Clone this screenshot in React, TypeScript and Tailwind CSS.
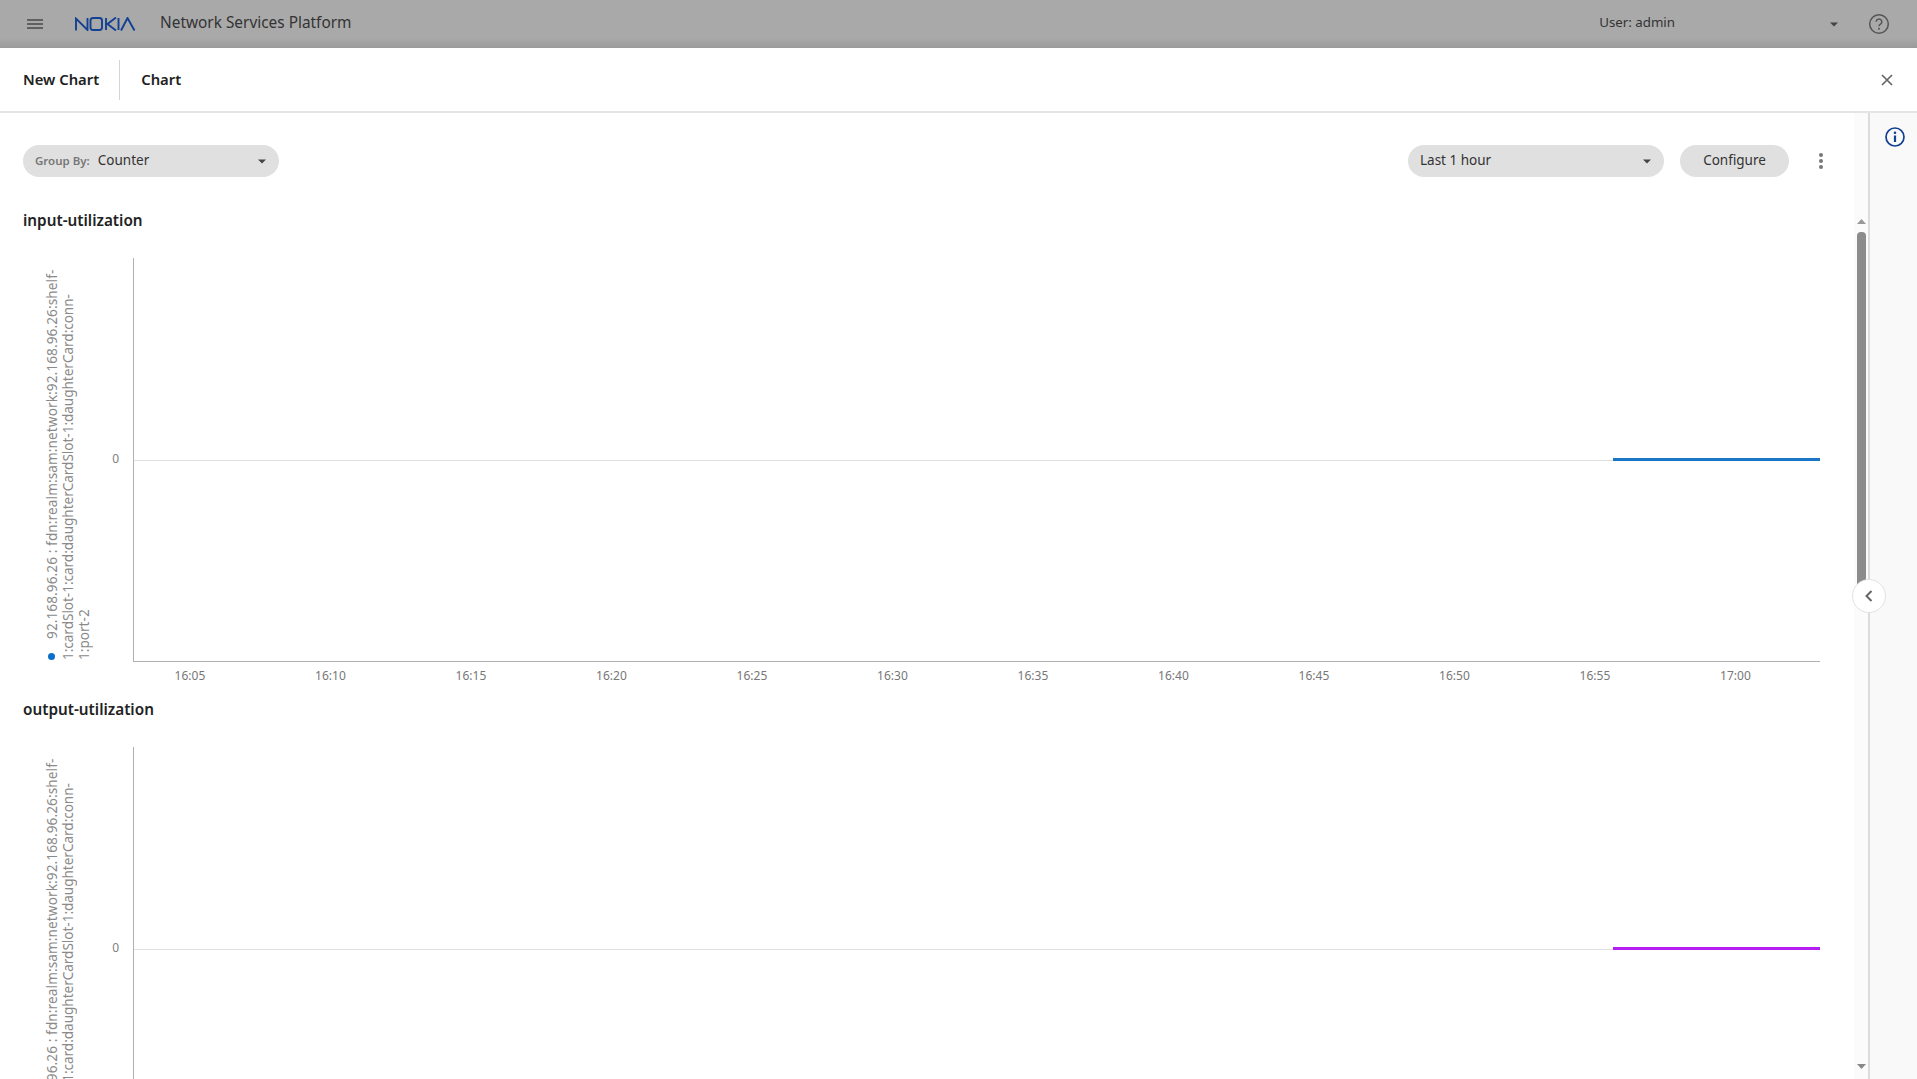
import React from "react";

const font = { fontFamily: '"Noto Sans", "Open Sans", sans-serif' };
const ticks = ["16:05","16:10","16:15","16:20","16:25","16:30","16:35","16:40","16:45","16:50","16:55","17:00"];

function Caret({ className = "" }: { className?: string }) {
  return (
    <svg width="8" height="5" viewBox="0 0 8 5" className={className}>
      <path d="M0 0.5h8L4 4.5z" fill="#444" />
    </svg>
  );
}

function Chart({ title, color, dot }: { title: string; color: string; dot: string }) {
  return (
    <section>
      <h2 className="h-5 text-[15.3px] leading-[18px] font-semibold text-[#222]">{title}</h2>
      <div className="mt-[27px] flex">
        <div className="ml-[21px] h-[404px] w-[89px] shrink-0">
          <div className="h-full w-12 rotate-180 text-[13.6px] leading-4 text-[#8a8a8a] [writing-mode:vertical-rl] whitespace-nowrap">
            <div className="flex items-center pt-[2px] tracking-[0.1px]">
              <span className={`mb-[14px] h-[7px] w-[7px] shrink-0 rounded-full ${dot}`} />
              92.168.96.26 : fdn:realm:sam:network:92.168.96.26:shelf-
            </div>
            <div className="pt-[2px] tracking-[-0.05px]">1:cardSlot-1:card:daughterCardSlot-1:daughterCard:conn-</div>
            <div className="pt-[2px]">1:port-2</div>
          </div>
        </div>
        <div className="w-[1687px] shrink-0">
          <div className="relative h-[404px] border-b border-l border-[#b0b0b0]">
            <span className="absolute right-full top-[193px] mr-[15px] text-xs leading-4 text-[#808080]">0</span>
            <div className="absolute left-0 right-0 top-[202px] h-px bg-[#e0e0e0]" />
            <div className={`absolute right-0 top-[200px] h-[3px] w-[207px] ${color}`} />
          </div>
          <div className="-ml-[13.3px] flex h-[38px] pt-[6px]">
            {ticks.map((t) => (
              <span key={t} className="w-[140.5px] shrink-0 text-center text-xs leading-4 text-[#777]">{t}</span>
            ))}
          </div>
        </div>
      </div>
    </section>
  );
}

export default function App() {
  return (
    <div style={font} className="flex h-screen w-full flex-col overflow-hidden bg-white">
      <header className="flex h-12 shrink-0 items-center bg-gradient-to-b from-[#a9a9a9] from-80% to-[#9a9a9a] text-[#333]">
        <svg width="16" height="10" viewBox="0 0 16 10" className="ml-[27px]">
          <path d="M0 1h16M0 5h16M0 9h16" stroke="#4a4a4a" strokeWidth="1.4" />
        </svg>
        <svg width="61" height="14" viewBox="0 0 61 14" className="ml-[32px]" fill="none" stroke="#124191" strokeWidth="1.9">
          <path d="M1 13.5V1.6L12.5 13V1" />
          <path d="M18 1h6.5q2.5 0 2.5 2.5v7q0 2.5-2.5 2.5H18q-2.5 0-2.5-2.5v-7Q15.500 1 18 1z" />
          <path d="M31 1v12" />
          <path d="M41 0.500L32.500 7l8.500 6.500" />
          <path d="M43.500 1v12" />
          <path d="M46 13.500L52.500 1l7 12.500" />
        </svg>
        <span className="ml-[24px] pb-[2px] text-[15.4px] leading-5">Network Services Platform</span>
        <span className="ml-auto pb-[4px] text-[13.3px] leading-5">User: admin</span>
        <Caret className="ml-[155px]" />
        <svg width="22" height="22" viewBox="0 0 22 22" className="ml-[30px] mr-[27px]" fill="none">
          <circle cx="11" cy="11" r="9.300" stroke="#555" strokeWidth="1.500" />
          <path d="M8.200 8.700a2.800 2.800 0 1 1 4.300 2.400c-.9.600-1.500 1-1.500 2.200" stroke="#555" strokeWidth="1.500" />
          <circle cx="11" cy="15.800" r="1" fill="#555" />
        </svg>
      </header>

      <div className="flex h-[65px] shrink-0 items-center border-b-2 border-[#e4e4e4]">
        <span className="ml-[23px] text-[14.8px] font-semibold text-[#222]">New Chart</span>
        <span className="ml-[20px] h-10 w-px bg-[#d4d4d4]" />
        <span className="ml-[21px] text-[14.8px] font-semibold text-[#222]">Chart</span>
        <svg width="12" height="12" viewBox="0 0 12 12" className="ml-auto mr-[24px]">
          <path d="M1 1l10 10M11 1L1 11" stroke="#666" strokeWidth="1.700" />
        </svg>
      </div>

      <div className="relative flex min-h-0 flex-1">
        <main className="min-w-0 flex-1 overflow-hidden pl-[23px] pt-[32px]">
          <div className="flex h-8 items-center">
            <div className="flex h-8 w-[256px] items-center rounded-full bg-[#e0e0e0] pl-3 pr-3">
              <span className="pb-px text-[11.500px] font-semibold text-[#777]">Group By:</span>
              <span className="ml-2 pb-px text-[13.500px] text-[#333]">Counter</span>
              <Caret className="ml-auto mr-px" />
            </div>
            <div className="ml-auto flex h-8 w-[256px] items-center rounded-full bg-[#e0e0e0] pl-3 pr-3">
              <span className="pb-px text-[13.500px] text-[#333]">Last 1 hour</span>
              <Caret className="ml-auto mr-px" />
            </div>
            <div className="ml-4 flex h-8 w-[109px] items-center justify-center rounded-full bg-[#e0e0e0] pb-px text-[13.500px] text-[#333]">Configure</div>
            <svg width="6" height="18" viewBox="0 0 6 18" className="ml-[29px] mr-[30px]">
              <circle cx="3" cy="3" r="2" fill="#777" /><circle cx="3" cy="9" r="2" fill="#777" /><circle cx="3" cy="15" r="2" fill="#777" />
            </svg>
          </div>
          <div className="mt-[34px]">
            <Chart title="input-utilization" color="bg-[#1b76c8]" dot="bg-[#0a6fc9]" />
            <Chart title="output-utilization" color="bg-[#b61df0]" dot="bg-[#b61df0]" />
          </div>
        </main>

        <div className="flex w-[14px] shrink-0 flex-col items-center bg-[#fbfbfb] pt-[106px] pb-[10px]">
          <svg width="9" height="5" viewBox="0 0 9 5"><path d="M4.500 0L9 5H0z" fill="#999" /></svg>
          <div className="mt-[8px] h-[365px] w-[9px] shrink-0 rounded-t-[4px] bg-[#8c8c8c]" />
          <svg width="9" height="5" viewBox="0 0 9 5" className="mt-auto"><path d="M0 0h9L4.500 5z" fill="#888" /></svg>
        </div>

        <aside className="flex w-[49px] shrink-0 justify-center border-l-2 border-[#dcdcdc] bg-[#f9f9f9] pl-[2px] pt-[14px]">
          <svg width="20" height="20" viewBox="0 0 20 20" fill="none">
            <circle cx="10" cy="10" r="9" stroke="#124191" strokeWidth="1.700" />
            <circle cx="10" cy="5.800" r="1.300" fill="#124191" />
            <path d="M10 8.500v6.500" stroke="#124191" strokeWidth="2.200" />
          </svg>
        </aside>

        <button className="absolute left-[1852px] top-[466px] flex h-[34px] w-[34px] items-center justify-center rounded-full border border-[#e2e2e2] bg-white">
          <svg width="8" height="12" viewBox="0 0 8 12" fill="none"><path d="M6.500 1L1.500 6l5 5" stroke="#666" strokeWidth="2" /></svg>
        </button>
      </div>
    </div>
  );
}
